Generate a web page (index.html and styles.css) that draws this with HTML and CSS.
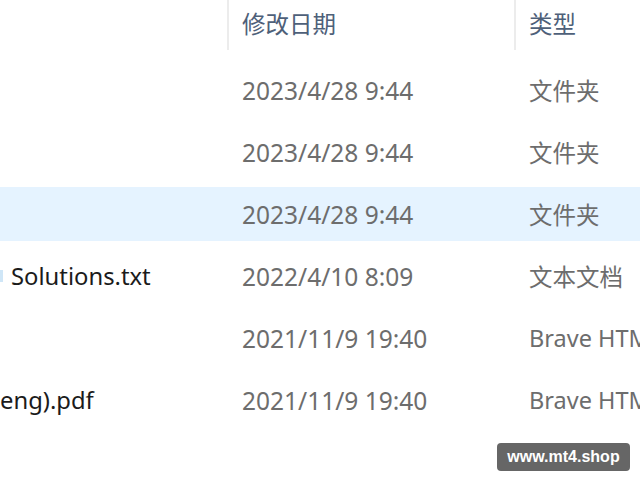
FILE: index.html
```html
<!DOCTYPE html>
<html lang="zh-CN">
<head>
<meta charset="utf-8">
<title>Explorer</title>
<link rel="stylesheet" href="styles.css">
</head>
<body>
<div class="view">
  <div class="header">
    <div class="hcell hname"></div>
    <div class="hcell hdate">修改日期</div>
    <div class="hcell htype">类型</div>
  </div>
  <div class="rows">
    <div class="row"><div class="cell name"></div><div class="cell date">2023/4/28 9:44</div><div class="cell type">文件夹</div></div>
    <div class="row"><div class="cell name"></div><div class="cell date">2023/4/28 9:44</div><div class="cell type">文件夹</div></div>
    <div class="row selected"><div class="cell name"></div><div class="cell date">2023/4/28 9:44</div><div class="cell type">文件夹</div></div>
    <div class="row"><div class="cell name"><span class="icon-edge"></span><span class="fname">Solutions.txt</span></div><div class="cell date">2022/4/10 8:09</div><div class="cell type">文本文档</div></div>
    <div class="row"><div class="cell name"></div><div class="cell date">2021/11/9 19:40</div><div class="cell type">Brave HTML Document</div></div>
    <div class="row"><div class="cell name"><span class="fname">eng).pdf</span></div><div class="cell date">2021/11/9 19:40</div><div class="cell type">Brave HTML Document</div></div>
  </div>
</div>
<div class="watermark">www.mt4.shop</div>
</body>
</html>
```
FILE: styles.css
```css
* { box-sizing: border-box; }
html, body {
  margin: 0;
  padding: 0;
  width: 640px;
  height: 480px;
  overflow: hidden;
  background: #ffffff;
  font-family: "Noto Sans", "Noto Sans CJK SC", sans-serif;
}
.view {
  display: flex;
  flex-direction: column;
  width: 640px;
}
.header {
  display: grid;
  grid-template-columns: 229px 287px 1fr;
  height: 50px;
  margin-bottom: 9px;
}
.hcell {
  display: flex;
  align-items: center;
  font-size: 23.5px;
  color: #4e6079;
  padding-left: 13px;
  padding-bottom: 4px;
  white-space: nowrap;
  overflow: hidden;
}
.hname, .hdate { border-right: 2px solid #ececec; }
.rows {
  display: flex;
  flex-direction: column;
}
.row {
  display: grid;
  grid-template-columns: 229px 287px 1fr;
  height: 54px;
  margin: 4px 0;
  align-items: center;
}
.row.selected { background: #e5f3ff; }
.cell {
  white-space: nowrap;
  overflow: hidden;
  font-size: 23.5px;
  color: #6d6d6d;
  padding-left: 13px;
}
.cell.date { font-size: 24.5px; }
.cell.name {
  display: flex;
  align-items: center;
  padding-left: 0;
  color: #1b1b1b;
}
.icon-edge {
  display: inline-block;
  width: 3px;
  height: 12px;
  background: #cfe6f7;
  margin-right: 8px;
}
.fname { color: #1b1b1b; font-size: 23.8px; }
.watermark {
  position: absolute;
  left: 497px;
  top: 443px;
  width: 133px;
  height: 28px;
  background: #666666;
  border-radius: 4px;
  color: #ffffff;
  font-family: "Liberation Sans", Arial, sans-serif;
  font-weight: bold;
  font-size: 16px;
  display: flex;
  align-items: center;
  justify-content: center;
}
```
